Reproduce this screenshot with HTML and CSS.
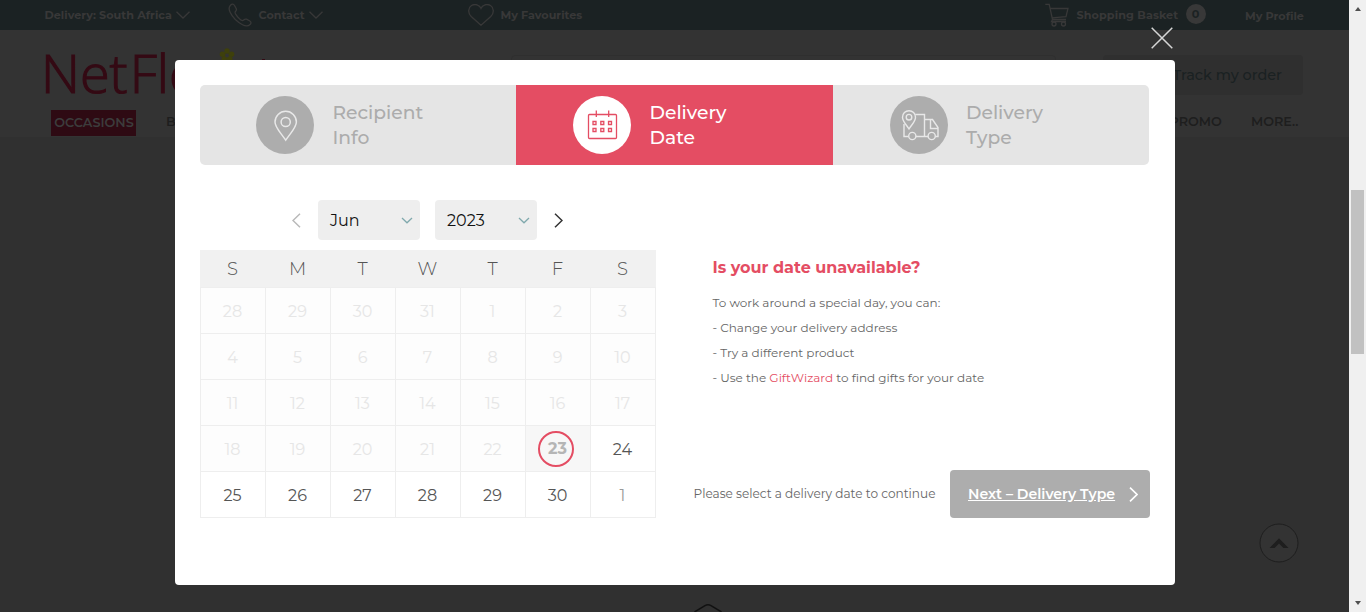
FILE: index.html
```
<!DOCTYPE html>
<html lang="en">
<head>
<meta charset="utf-8">
<title>NetFlorist</title>
<link rel="stylesheet" href="styles.css">
</head>
<body>
<div class="window">
  <div class="site">
    <div class="topbar">
      <div class="top-item delivery"><span class="t-delivery">Delivery: South Africa</span><svg width="14" height="8" viewBox="0 0 14 8"><path d="M.5.7 7 7 13.500.7"/></svg></div>
      <div class="top-item contact"><svg class="phone" width="24" height="24" viewBox="0 0 24 24"><path d="M2.500 2.200C4 .7 5.500.8 6.500 2.500L8.300 5.800C8.900 7 8.300 7.700 7.300 8.700 6.500 9.500 8.500 12.500 10 14.200 11.700 16 14.500 18 15.300 17.300 16.500 16.300 17.300 15.600 18.500 16.200L21.800 18C23.400 19 23.300 20.300 22 21.500 20.300 23.200 17.500 23.300 14.500 21.700 8.500 18.500 4.500 14.300 2 9 .7 6.200.8 4 2.500 2.200Z"/></svg><span class="t-contact">Contact</span><svg width="14" height="8" viewBox="0 0 14 8"><path d="M.5.7 7 7 13.500.7"/></svg></div>
      <div class="top-item favourites"><svg width="26" height="22" viewBox="0 0 26 22"><path d="M13 21.200 3.200 12.500C-.5 9 .2 3.500 3.500 1.500 7-.4 11.500.6 13 4.300 14.500.6 19-.4 22.500 1.500 25.800 3.500 26.500 9 22.800 12.500Z"/></svg><span>My Favourites</span></div>
      <div class="top-item basket"><svg width="24" height="24" viewBox="0 0 24 24"><path d="M.3 1.300H4.200L7.500 16.500H21M4.900 5.500H23L21 13.700 7 14.800M7.500 16.500 6.500 18.500H21"/><circle cx="9" cy="21" r="2"/><circle cx="18.500" cy="21" r="2"/></svg><span class="t-basket">Shopping Basket</span><span class="count">0</span></div>
      <div class="top-item profile">My Profile</div>
    </div>
    <div class="header">
      <div class="brand-row">
        <div class="logo">Net<span>Flo</span></div>
        <svg class="flower" width="16" height="16" viewBox="0 0 16 16"><g fill="#3e400b"><circle cx="8" cy="3" r="2.700"/><circle cx="3.400" cy="6.300" r="2.700"/><circle cx="12.600" cy="6.300" r="2.700"/><circle cx="5.200" cy="11" r="2.700"/><circle cx="10.800" cy="11" r="2.700"/><circle cx="8" cy="8" r="3"/></g><circle cx="8" cy="7.500" r="1.900" fill="#333"/></svg>
        <div class="logo-tip"></div>
        <div class="search"></div>
        <div class="track">Track my order</div>
      </div>
      <div class="nav"><span class="active">OCCASIONS</span><span class="nav-b">B</span><span class="promo">PROMO</span><span>MORE..</span></div>
    </div>
    <div class="content">
      <svg class="to-top" width="40" height="40" viewBox="0 0 40 40"><circle cx="20" cy="20" r="19" fill="#333" stroke="#1e1e1e"/><path d="M10.500 25 20 15.200 29.500 25H24.500L20 20.500 15.500 25Z" fill="#1e1e1e"/></svg>
      <svg class="hex" width="40" height="8" viewBox="0 0 40 8"><path d="M6.500 8 17 1.700Q20 0 23 1.700L33.500 8" fill="none" stroke="#111" stroke-width="1.500"/></svg>
    </div>
  </div>
  <div class="scrollbar"><span class="arrow up"></span><span class="thumb"></span><span class="arrow down"></span></div>

  <svg class="close" width="22" height="22" viewBox="0 0 22 22"><path d="m.7.7 20.600 20.600M21.300.7.7 21.300" stroke="#d6d6d6" stroke-width="1.500"/></svg>
  <div class="modal">
    <div class="steps">
      <div class="step">
        <div class="disc"><svg width="58" height="58" viewBox="0 0 58 58"><path d="M29.700 44.200C25 37 19 31.500 19 26A10.700 10.700 0 0 1 40.400 26C40.400 31.500 34.500 37 29.700 44.200Z"/><circle cx="29.700" cy="26" r="4.600"/></svg></div>
        <div class="step-text">Recipient<br>Info</div>
      </div>
      <div class="step current">
        <div class="disc"><svg width="58" height="58" viewBox="0 0 58 58"><rect x="15.500" y="18.500" width="28" height="24" rx="1"/><path d="M23.300 14.500v6.500M35.700 14.500v6.500"/><path d="M20 25.500h3v3h-3zM27.800 25.500h3v3h-3zM35.500 25.500h3v3h-3zM20 32.500h3v3h-3zM27.800 32.500h3v3h-3zM35.500 32.500h3v3h-3z"/></svg></div>
        <div class="step-text">Delivery<br>Date</div>
      </div>
      <div class="step">
        <div class="disc"><svg width="58" height="58" viewBox="0 0 58 58"><g stroke-width="1.400"><path d="M19 33C16 28 12.500 25.500 12.500 21.200A6.500 6.500 0 0 1 25.500 21.200C25.500 25.500 22 28 19 33Z"/><circle cx="19" cy="21.200" r="2.800"/><path d="M25.300 18.500H34.500V40.500H26M18.500 40.500H14V28M34.500 23.500H42.500L48 31.500V40.500H45.500M38 40.500H34.500M40.500 23.500V32.500H48"/><circle cx="22.300" cy="40" r="3.600"/><circle cx="41.700" cy="40" r="3.600"/></g></svg></div>
        <div class="step-text">Delivery<br>Type</div>
      </div>
    </div>
    <div class="body">
      <div class="picker">
        <div class="month-bar">
          <svg class="prev" width="9" height="15" viewBox="0 0 9 15"><path d="M8 .7 1 7.500 8 14.300"/></svg>
          <div class="select"><span>Jun</span><svg width="12" height="7" viewBox="0 0 12 7"><path d="m1 1 5 4.800L11 1"/></svg></div>
          <div class="select"><span>2023</span><svg width="12" height="7" viewBox="0 0 12 7"><path d="m1 1 5 4.800L11 1"/></svg></div>
          <svg class="next" width="9" height="15" viewBox="0 0 9 15"><path d="m1 .7 7 6.800-7 6.800"/></svg>
        </div>
        <div class="days"><span>S</span><span>M</span><span>T</span><span>W</span><span>T</span><span>F</span><span>S</span></div>
        <div class="dates">
          <span class="off">28</span><span class="off">29</span><span class="off">30</span><span class="off">31</span><span class="off">1</span><span class="off">2</span><span class="off">3</span>
          <span class="off">4</span><span class="off">5</span><span class="off">6</span><span class="off">7</span><span class="off">8</span><span class="off">9</span><span class="off">10</span>
          <span class="off">11</span><span class="off">12</span><span class="off">13</span><span class="off">14</span><span class="off">15</span><span class="off">16</span><span class="off">17</span>
          <span class="off">18</span><span class="off">19</span><span class="off">20</span><span class="off">21</span><span class="off">22</span><span class="today"><b>23</b></span><span>24</span>
          <span>25</span><span>26</span><span>27</span><span>28</span><span>29</span><span>30</span><span class="other">1</span>
        </div>
      </div>
      <div class="side">
        <div class="help">
          <h2>Is your date unavailable?</h2>
          <p>To work around a special day, you can:</p>
          <p>- Change your delivery address</p>
          <p>- Try a different product</p>
          <p>- Use the <a>GiftWizard</a> to find gifts for your date</p>
        </div>
        <div class="actions">
          <span class="hint">Please select a delivery date to continue</span>
          <div class="button"><u>Next – Delivery Type</u><svg width="9" height="15" viewBox="0 0 9 15"><path d="m1 .7 7 6.800-7 6.800"/></svg></div>
        </div>
      </div>
    </div>
  </div>
</div>
</body>
</html>
```
FILE: styles.css
```
* { box-sizing: border-box; }
body { margin: 0; font-family: Montserrat, Inter, "Liberation Sans", sans-serif; overflow: hidden; }
svg { display: block; flex: none; }
.window { position: relative; display: flex; width: 1366px; height: 612px; overflow: hidden; }
.site { width: 1349px; display: flex; flex-direction: column; background: #303030; }

.topbar { display: flex; height: 30px; background: #1b2223; color: #383838; font-size: 11.200px; font-weight: 700; padding-left: 44.500px; white-space: nowrap; }
.top-item { display: flex; align-items: center; }
.top-item svg { fill: none; stroke: #383838; stroke-width: 1.3; }
.delivery { width: 183px; gap: 4px; }
.t-delivery { width: 127px; letter-spacing: .03px; }
.contact { width: 240px; gap: 4px; }
.contact .phone { margin-right: 3px; }
.favourites { width: 577px; gap: 7px; }
.basket { width: 200.500px; gap: 8px; }
.t-contact { width: 46px; }
.t-basket { width: 101px; letter-spacing: .1px; }
.profile { padding-top: 2px; }
.count { width: 20px; height: 20px; margin-top: -2px; border-radius: 50%; background: #383838; color: #1b2223; display: grid; place-items: center; }

.header { height: 107px; background: #333; }
.brand-row { display: flex; height: 80px; }
.logo { width: 174px; padding-left: 41px; font: 300 54px/80px "Open Sans", sans-serif; color: #340a14; -webkit-text-stroke: 1.200px #340a14; padding-top: 2px; white-space: nowrap; }
.logo span { margin-left: 2px; }
.flower { margin: 18px 0 0 45px; }
.logo-tip { width: 3px; height: 4px; margin: 29px 0 0 27px; background: #340a14; }
.search { width: 545px; height: 40px; margin: 25px 0 0 246px; border: 1px solid #2f2f2f; border-radius: 4px; }
.track { width: 200px; height: 40px; margin: 25px 0 0 47px; padding-right: 21px; border-radius: 4px; background: #2f2f2f; color: #1a2122; font-size: 14.400px; font-weight: 500; line-height: 40px; text-align: right; }
.nav { display: flex; height: 26px; line-height: 24px; padding-left: 51px; color: #1e1e1e; font-size: 12.800px; font-weight: 600; }
.nav .active { width: 85px; padding-left: 1px; background: #2e0a13; color: #3c3c3c; text-align: center; line-height: 26px; }
.nav-b { width: 984px; padding-left: 30px; }
.promo { width: 131px; padding-left: 49.500px; }
.content { flex: 1; position: relative; }
.to-top { position: absolute; left: 1259px; top: 386px; }
.hex { position: absolute; left: 688px; top: 467px; }

.scrollbar { width: 17px; background: #f0f0f0; display: flex; flex-direction: column; align-items: center; }
.arrow { border: 3.500px solid transparent; }
.up { border-bottom: 4px solid #505050; border-top: 0; margin-top: 7px; }
.thumb { width: 13px; height: 164px; margin-top: 179px; margin-left: -1px; background: #c1c1c1; }
.down { border-top: 4px solid #505050; border-bottom: 0; margin-top: 247px; }

.close { position: absolute; left: 1151px; top: 27px; }
.modal { position: absolute; left: 175px; top: 60px; width: 1000px; height: 525px; padding: 25px; background: #fff; border-radius: 4px; }
.steps { display: grid; grid-template-columns: 316px 317px 316px; width: 949px; height: 80px; border-radius: 5px; overflow: hidden; }
.step { display: flex; align-items: center; gap: 18.500px; padding-left: 56px; background: #e5e5e5; color: #acacac; }
.step.current { padding-left: 57px; background: #e44d63; color: #fff; }
.step:last-child { padding-left: 57px; gap: 18px; }
.disc { width: 58px; height: 58px; border-radius: 50%; background: #adadad; }
.disc svg { fill: none; stroke: #e8e8e8; stroke-width: 1.5; }
.current .disc { background: #fff; }
.current .disc svg { stroke: #e44d63; stroke-width: 1.300; }
.step-text { font-size: 18.720px; line-height: 25px; font-weight: 500; white-space: nowrap; }

.body { display: flex; padding-top: 35px; height: 353px; }
.picker { width: 456px; }
.month-bar { display: flex; align-items: center; height: 40px; padding-left: 92px; }
.month-bar > svg { fill: none; stroke-width: 1.5; }
.prev { stroke: #b9b9b9; margin-right: 17px; }
.next { stroke: #333; margin-left: 2px; }
.select { width: 102px; height: 40px; margin-right: 15px; padding: 0 7px 0 12px; border-radius: 4px; background: #eee; display: flex; align-items: center; justify-content: space-between; font-size: 16px; color: #111; }
.select svg { fill: none; stroke: #80a9ad; stroke-width: 1.3; }
.days { display: grid; grid-template-columns: repeat(7, 65px); height: 37px; margin-top: 10px; background: #f1f1f1; color: #555; font-size: 18px; font-weight: 300; line-height: 38px; text-align: center; }
.dates { display: grid; grid-template-columns: repeat(7, 65px); grid-auto-rows: 46px; border-right: 1px solid #eee; border-bottom: 1px solid #eee; font-size: 16px; font-weight: 400; color: #555; line-height: 47px; text-align: center; }
.dates span { border-left: 1px solid #eee; border-top: 1px solid #eee; padding-right: 1px; }
.dates .off { background: #fdfdfd; color: #e6e6e6; }
.dates .other { color: #999; }
.dates .today { display: grid; place-items: center; background: #f7f7f7; color: #b5b5b5; padding: 0 4px 0 0; }
.today b { width: 36px; height: 36px; border: 2px solid #e44d63; border-radius: 50%; line-height: 32px; padding-left: 3px; }

.side { flex: 1; display: flex; flex-direction: column; justify-content: space-between; }
.help { padding: 55px 0 0 56.500px; color: #666; font-size: 12px; line-height: 25px; white-space: nowrap; }
.help h2 { margin: 0 0 10px; font-size: 16px; line-height: 25px; font-weight: 700; color: #e44d63; }
.help p { margin: 0; }
.help a { color: #e44d63; }
.actions { display: flex; align-items: center; justify-content: space-between; padding-left: 37.500px; width: 494px; }
.hint { color: #666; font-size: 12.100px; padding-bottom: 2px; white-space: nowrap; }
.button { width: 200px; height: 48px; padding: 0 12px 0 18px; border-radius: 4px; background: #adadad; color: #fff; display: flex; align-items: center; justify-content: space-between; font-size: 14.100px; font-weight: 600; white-space: nowrap; }
.button svg { fill: none; stroke: #fff; stroke-width: 1.7; }
```
